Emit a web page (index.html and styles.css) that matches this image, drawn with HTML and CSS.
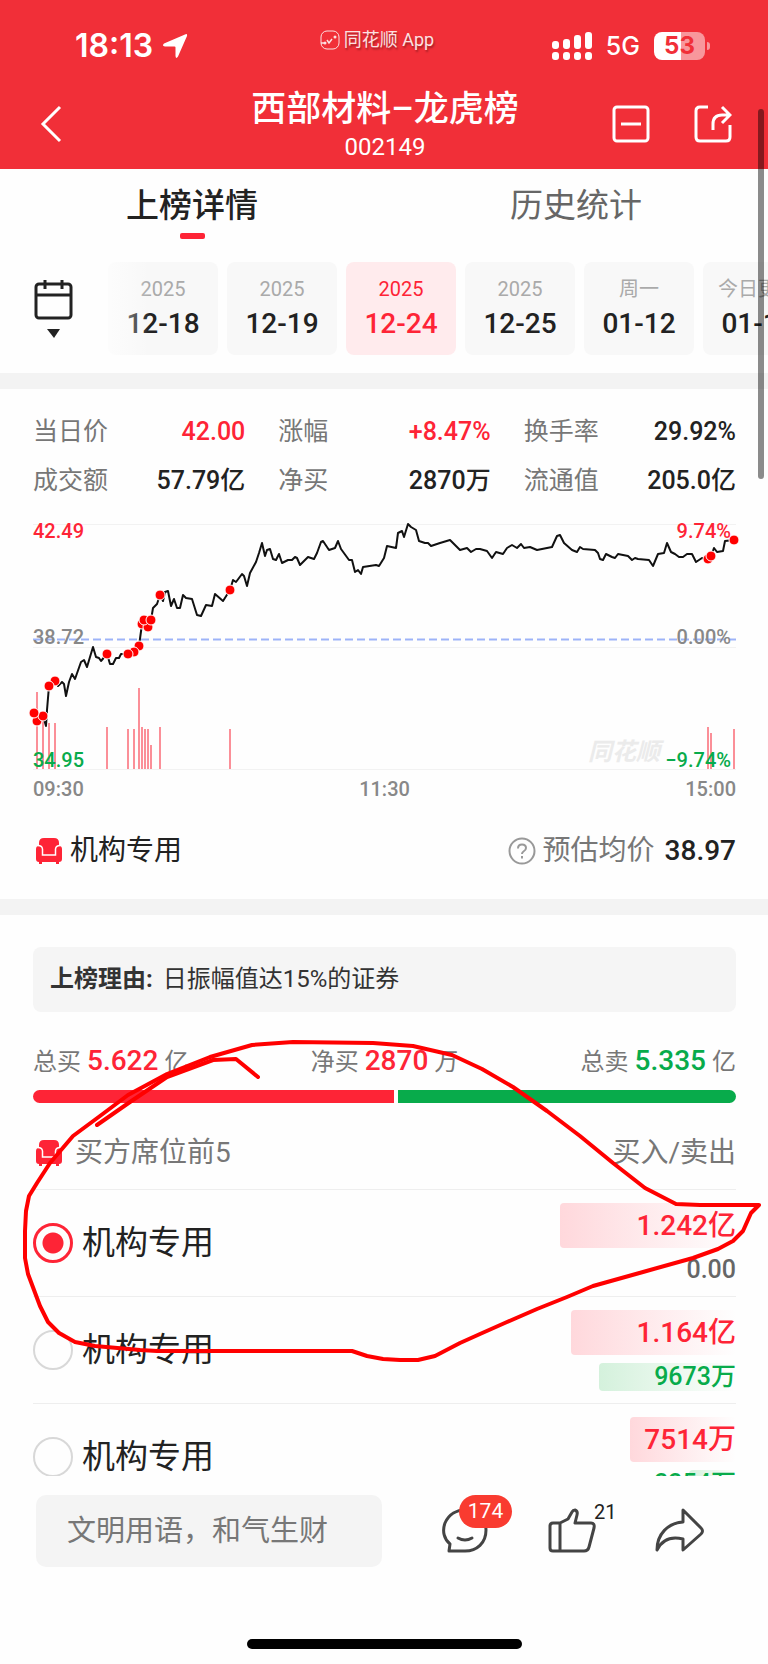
FILE: index.html
```html
<!DOCTYPE html>
<html lang="zh-CN">
<head>
	<meta charset="UTF-8">
	<meta name="viewport" content="width=device-width, initial-scale=1">
	<title>西部材料-龙虎榜</title>
	<link rel="stylesheet" href="styles.css">
</head>
<body>
<div class="app">

	<header class="header">
		<div class="status">
			<div class="status-left">
				<span class="time">18:13</span>
				<svg width="26" height="26" viewBox="0 0 26 26"><path d="M23 1.500Q25.500 0 25 3L16 23.500Q14 26.500 13.500 23V14.500Q13.500 13.500 12.500 13.500H3Q-.5 13 2 10.500Z" fill="#fff"/></svg>
			</div>
			<div class="brand">
				<svg width="20" height="20" viewBox="0 0 20 20" fill="none" stroke="#fff" stroke-width="1"><rect x="1" y="1" width="18" height="18" rx="6"/><path d="M1 13h4M7 10l2 3 3-4" stroke-width="1.500"/><circle cx="15" cy="7" r="1.500" fill="#fff" stroke="none"/><circle cx="5" cy="13" r="1.500" fill="#fff" stroke="none"/></svg>
				<span>同花顺 App</span>
			</div>
			<div class="status-right">
				<svg width="40" height="28" viewBox="0 0 40 28" fill="#fff">
					<rect x="0" y="9" width="7" height="8" rx="3"/><rect x="11" y="7" width="7" height="10" rx="3"/><rect x="22" y="3" width="7" height="14" rx="3"/><rect x="33" y="0" width="7" height="17" rx="3"/>
					<rect x="0" y="20" width="7" height="8" rx="3"/><rect x="11" y="20" width="7" height="8" rx="3"/><rect x="22" y="20" width="7" height="8" rx="3"/><rect x="33" y="20" width="7" height="8" rx="3"/>
				</svg>
				<span class="net">5G</span>
				<span class="battery">53</span>
			</div>
		</div>
		<div class="nav">
			<button class="icon-btn" aria-label="返回">
				<svg width="24" height="38" viewBox="0 0 24 38" fill="none" stroke="#fff" stroke-width="3"><path d="M22 2L5 19l17 17"/></svg>
			</button>
			<div class="title">
				<h1>西部材料–龙虎榜</h1>
				<p>002149</p>
			</div>
			<div class="nav-right">
				<button class="icon-btn" aria-label="缩小">
					<svg width="38" height="38" viewBox="0 0 38 38" fill="none" stroke="#fff" stroke-width="3"><rect x="2" y="2" width="34" height="34" rx="3"/><path d="M9 19h20"/></svg>
				</button>
				<button class="icon-btn" aria-label="分享">
					<svg width="38" height="38" viewBox="0 0 38 38" fill="none" stroke="#fff" stroke-width="3"><path d="M14 2H6q-4 0-4 4v26q0 4 4 4h26q4 0 4-4V20M19 25v-6q0-9 9-9h7M28 2l8 8-8 8"/></svg>
				</button>
			</div>
		</div>
	</header>

	<main class="main">
		<nav class="tabs">
			<a href="#detail" class="tab active">上榜详情</a>
			<a href="#history" class="tab">历史统计</a>
		</nav>

		<div class="dates">
			<button class="calendar" aria-label="选择日期">
				<svg width="40" height="60" viewBox="0 0 40 60" fill="none" stroke="#222" stroke-width="3"><rect x="3" y="5" width="35" height="34" rx="3"/><path d="M3 16h35M12 1v9M29 1v9"/><path d="M14 50h13l-6 9z" fill="#222" stroke="none"/></svg>
			</button>
			<div class="chips">
				<button class="chip"><small>2025</small><b>12-18</b></button>
				<button class="chip"><small>2025</small><b>12-19</b></button>
				<button class="chip on"><small>2025</small><b>12-24</b></button>
				<button class="chip"><small>2025</small><b>12-25</b></button>
				<button class="chip"><small>周一</small><b>01-12</b></button>
				<button class="chip"><small>今日更新</small><b>01-13</b></button>
			</div>
		</div>

		<section class="quote">
			<dl class="stats">
				<div><dt>当日价</dt><dd class="red">42.00</dd></div>
				<div><dt>涨幅</dt><dd class="red">+8.47%</dd></div>
				<div><dt>换手率</dt><dd>29.92%</dd></div>
				<div><dt>成交额</dt><dd>57.79亿</dd></div>
				<div><dt>净买</dt><dd>2870万</dd></div>
				<div><dt>流通值</dt><dd>205.0亿</dd></div>
			</dl>

			<svg class="chart" viewBox="0 0 703 246">
				<path class="grid" d="M0 .5H703M0 123.500H703M0 245.500H703"/>
				<text class="mark" x="555" y="236">同花顺</text>
				<path class="base" d="M0 115.500H703"/>
				<!-- 上榜资金 -->
				<path class="vol" d="M4 168V245M10 197V245M16 199V245M22 199V245M74 203V245M95 205V245M101 205V245M106 164V245M109 203V245M112 205V245M115 205V245M118 221V245M127 203V245M197 205V245M675 203V245M678 209V245M701 205V245"/>
				<polyline class="price" points="1,189 4,197 10,192 13,202 14,186 16,162 22,157 25,162 29,158 31,160 33,172 36,158 39,150 42,155 48,138 51,136 54,143 60,123 63,133 66,134 68,137 74,130 77,140 80,140 83,134 86,134 88,130 95,130 101,128 106,122 109,100 111,96 115,103 118,96 120,84 124,80 127,71 130,77 132,68 135,67 138,82 141,75 144,84 147,84 150,71 153,74 159,75 164,91 168,92 173,81 179,82 182,70 190,77 197,66 200,56 203,58 209,50 211,52 214,62 217,49 223,38 226,29 229,19 232,32 234,26 237,25 240,35 243,36 246,30 249,39 255,36 259,36 262,33 264,34 267,41 275,33 281,35 284,29 288,18 290,17 296,26 302,24 305,17 308,25 316,36 319,36 322,48 325,46 328,50 330,43 343,41 346,42 351,34 354,22 363,24 365,9 369,7 371,13 375,0 378,3 383,6 386,17 392,19 395,19 398,22 407,19 417,16 427,26 434,24 438,28 443,25 447,25 454,27 459,34 463,28 470,30 474,24 479,21 484,24 488,20 491,24 497,23 504,26 519,23 524,12 527,11 531,19 539,26 544,28 547,23 550,25 562,26 565,29 567,35 570,36 573,30 579,33 582,34 585,30 595,32 599,36 602,34 605,35 616,36 620,42 625,30 631,29 634,19 638,28 642,30 646,33 650,33 654,30 659,30 663,38 669,34 675,35 678,32 681,24 684,28 690,27 692,17 701,16"/>
				<g class="dots">
					<circle cx="4" cy="197" r="5"/><circle cx="10" cy="192" r="5"/><circle cx="1" cy="189" r="5"/>
					<circle cx="22" cy="157" r="5"/><circle cx="16" cy="162" r="5"/><circle cx="74" cy="130" r="5"/>
					<circle cx="106" cy="122" r="5"/><circle cx="101" cy="128" r="5"/><circle cx="95" cy="130" r="5"/>
					<circle cx="109" cy="100" r="5"/><circle cx="115" cy="103" r="5"/><circle cx="111" cy="96" r="5"/><circle cx="118" cy="96" r="5"/>
					<circle cx="127" cy="71" r="5"/><circle cx="197" cy="66" r="5"/>
					<circle cx="675" cy="35" r="5"/><circle cx="678" cy="32" r="5"/><circle cx="701" cy="16" r="5"/>
				</g>
				<text class="up" x="0" y="14">42.49</text>
				<text class="flat" x="0" y="120">38.72</text>
				<text class="down" x="0" y="243">34.95</text>
				<text class="up end" x="698" y="14">9.74%</text>
				<text class="flat end" x="698" y="120">0.00%</text>
				<text class="down end" x="698" y="243">−9.74%</text>
			</svg>
			<div class="axis"><span>09:30</span><span>11:30</span><span>15:00</span></div>

			<div class="summary">
				<svg class="sofa" width="28" height="28" viewBox="0 0 28 28"><use href="#sofa"/></svg>
				<span class="org">机构专用</span>
				<svg class="help" width="28" height="28" viewBox="0 0 28 28" fill="none" stroke="#999" stroke-width="2"><circle cx="14" cy="14" r="12.500"/><path d="M10 11.500q0-4 4-4t4 3.500q0 2-2.500 3.500-1.500 1-1.500 2.500"/><path d="M14 19v2.500"/></svg>
				<span class="label">预估均价</span>
				<b>38.97</b>
			</div>
		</section>

		<section class="detail" id="detail">
			<p class="reason"><b>上榜理由:</b> 日振幅值达15%的证券</p>

			<div class="totals">
				<span>总买<b class="red">5.622</b>亿</span>
				<span>净买<b class="red">2870</b>万</span>
				<span>总卖<b class="green">5.335</b>亿</span>
			</div>
			<div class="ratio">
				<i class="buy" style="flex-grow: 5.622"></i>
				<i class="sell" style="flex-grow: 5.25"></i>
			</div>

			<div class="seats-head">
				<svg class="sofa" width="28" height="28" viewBox="0 0 28 28"><g id="sofa"><path d="M4 6Q4 1 9 1H19Q24 1 24 6V20H4Z" fill="#fe2436"/><path d="M1 12Q1 9 4 9T7 12V18H21V12Q21 9 24 9T27 12V22Q27 25 24 25V27H21V25H7V27H4V25Q1 25 1 22Z" fill="#fe2436"/><path d="M3 8.500Q7 8.500 7.500 12V18H20.500V12Q21 8.500 25 8.500" fill="none" stroke="#fff" stroke-width="1.500"/></g></svg>
				<h2>买方席位前5</h2>
				<span>买入/卖出</span>
			</div>

			<ul class="seats">
				<li>
					<label><input type="radio" name="seat" checked>机构专用</label>
					<div class="amount">
						<div class="in" style="width: 176px">1.242亿</div>
						<div class="out zero">0.00</div>
					</div>
				</li>
				<li>
					<label><input type="radio" name="seat">机构专用</label>
					<div class="amount">
						<div class="in" style="width: 165px">1.164亿</div>
						<div class="out" style="width: 137px">9673万</div>
					</div>
				</li>
				<li>
					<label><input type="radio" name="seat">机构专用</label>
					<div class="amount">
						<div class="in" style="width: 106px">7514万</div>
						<div class="out" style="width: 47px">3354万</div>
					</div>
				</li>
			</ul>

			<!-- 手绘圈注 -->
			<svg class="scribble" viewBox="0 0 768 350">
				<path d="M252 14L210 26 167 43 128 64 100 85 73 105 50 132 37 152 29 165 26 180 25 200 25 227 28 243 40 275 48 291 59 302 75 311 95 315 140 319 157 320 352 320 367 325 383 328 400 329 418 329 435 325 460 312 480 303 507 291 537 278 567 266 593 255 643 241 693 227 718 218 733 210 743 200 751 182 759 174 700 174 676 173 645 157 613 132 580 105 547 80 513 56 482 38 452 24 413 15 373 12 293 11Z"/>
				<path d="M258 46L236 28 213 29 167 46 130 71 97 94"/>
			</svg>
		</section>
	</main>

	<footer class="footer">
		<div class="bar">
			<input type="text" class="say" placeholder="文明用语，和气生财" aria-label="评论">
			<button class="action" aria-label="评论列表">
				<svg width="48" height="46" viewBox="0 0 48 46"><path d="M8 43L9 36C3 31 1 23 4 15C8 6 16 2 24 2C36 2 45 11 45 22C45 35 36 43 24 43Z"/><path d="M17 30q7 4 14 0"/></svg>
				<span class="badge">174</span>
			</button>
			<button class="action" aria-label="点赞">
				<svg width="48" height="46" viewBox="0 0 48 46"><path d="M12 15L20 11 24 4Q25 2 27 2Q30 3 29 7L27 15H43Q47 15 46 20L41 39Q40 43 36 43H5Q2 43 2 40V18Q2 15 5 15ZM12 15V43"/></svg>
				<span class="count">21</span>
			</button>
			<button class="action" aria-label="转发">
				<svg width="50" height="46" viewBox="0 0 50 46"><path d="M28 2L46 20Q49 23 46 26L28 42V31C16 28 7 32 2 42C2 26 13 15 28 14Z"/></svg>
			</button>
		</div>
		<div class="home"></div>
	</footer>

	<div class="scroll"></div>
</div>
</body>
</html>
```

FILE: styles.css
```css
*{
	padding: 0;
	margin: 0;
	box-sizing: border-box;
	list-style: none;
}
body{
	font-family: Roboto, "Noto Sans CJK SC", sans-serif;
	color: #222;
	background: #fefefe;
}
button{
	border: 0;
	background: none;
	font: inherit;
	color: inherit;
}
svg{
	display: block;
}
b{
	font-weight: 500;
}
.red{
	color: #fe2436;
}
.green{
	color: #08ab4b;
}
.app{
	position: relative;
	height: 100vh;
	display: flex;
	flex-direction: column;
	overflow: hidden;
}

/* 顶部 */
.header{
	flex: none;
	background: #f12f38;
	color: #fff;
}
.status{
	height: 92px;
	display: grid;
	grid-template-columns: 1fr auto 1fr;
	align-items: center;
}
.status-left,
.status-right,
.brand{
	display: flex;
	align-items: center;
}
.status-left{
	gap: 9px;
	padding-left: 75px;
}
.time{
	font: 600 32px/40px Inter, sans-serif;
}
.brand{
	gap: 4px;
	padding: 0 14px 12px 0;
	font-size: 18px;
	line-height: 24px;
	opacity: .85;
	text-shadow: 1px 2px 2px rgba(0,0,0,.4);
}
.status-right{
	justify-content: flex-end;
	gap: 14px;
	padding-right: 63px;
}
.net{
	font: 500 25px/32px Inter, sans-serif;
}
.battery{
	position: relative;
	width: 51px;
	height: 28px;
	border-radius: 8px;
	background: linear-gradient(90deg, #fff 27px, rgba(255,255,255,.5) 27px);
	color: #f12f38;
	font: 700 24px/28px Inter, sans-serif;
	text-align: center;
}
.battery::after{
	content: "";
	position: absolute;
	left: 53px;
	top: 10px;
	width: 3px;
	height: 8px;
	border-radius: 0 3px 3px 0;
	background: rgba(255,255,255,.5);
}
.nav{
	height: 77px;
	padding: 0 36px 0 38px;
	display: grid;
	grid-template-columns: 1fr auto 1fr;
}
.nav .icon-btn{
	height: 64px;
}
.nav > .icon-btn{
	justify-self: start;
}
.nav-right{
	display: flex;
	justify-content: flex-end;
	gap: 44px;
}
.title{
	text-align: center;
}
.title h1{
	font-size: 35px;
	font-weight: 500;
	line-height: 36px;
}
.title p{
	font-size: 24px;
	line-height: 38px;
}

/* 标签页 */
.main{
	flex: 1;
	min-height: 0;
	overflow: hidden;
}
.tabs{
	display: flex;
}
.tab{
	flex: 1;
	position: relative;
	text-align: center;
	font-size: 33px;
	line-height: 74px;
	height: 93px;
	color: #666;
	text-decoration: none;
}
.tab.active{
	color: #222;
	font-weight: 500;
}
.tab.active::after{
	content: "";
	position: absolute;
	left: 50%;
	top: 64px;
	width: 25px;
	height: 6px;
	margin-left: -12px;
	border-radius: 2px;
	background: #fe2436;
}
.dates{
	display: flex;
	padding-bottom: 18px;
}
.calendar{
	flex: none;
	width: 108px;
	padding-left: 33px;
}
.chips{
	position: relative;
	flex: 1;
	min-width: 0;
	display: flex;
	gap: 9px;
	overflow: hidden;
}
/* 左侧渐隐 */
.chips::before{
	content: "";
	position: absolute;
	left: 0;
	top: 0;
	width: 42px;
	height: 100%;
	background: linear-gradient(90deg, rgba(254,254,254,.7), rgba(254,254,254,0));
}
.chip{
	flex: none;
	width: 110px;
	height: 93px;
	border-radius: 8px;
	background: #f8f8f8;
}
.chip small,
.chip b{
	display: block;
	white-space: nowrap;
}
.chip small{
	font-size: 20px;
	line-height: 30px;
	color: #aaa;
}
.chip b{
	font-size: 28px;
	line-height: 40px;
}
.chip.on{
	background: #ffebed;
}
.chip.on small,
.chip.on b{
	color: #fe2436;
}

/* 行情 */
.quote{
	padding: 18px 32px 28px 33px;
	border-top: 16px solid #f3f3f3;
	border-bottom: 16px solid #f3f3f3;
}
.stats{
	display: grid;
	grid-template-columns: repeat(3, 1fr);
	column-gap: 33px;
}
.stats div{
	display: flex;
	justify-content: space-between;
	line-height: 49px;
	font-size: 25px;
}
.stats dt{
	color: #777;
}
.stats dd{
	font-weight: 500;
}
.chart{
	width: 100%;
	margin-top: 19px;
	overflow: visible;
}
.chart path,
.chart polyline{
	fill: none;
}
.grid{
	stroke: #f2f2f2;
}
.base{
	stroke: #9db3f8;
	stroke-width: 2;
	stroke-dasharray: 8 4;
}
.vol{
	stroke: #fb8f98;
	stroke-width: 2;
}
.price{
	stroke: #111;
	stroke-width: 2;
	stroke-linejoin: round;
}
.dots{
	fill: #f00;
	stroke: #fff;
	stroke-width: 1;
}
.chart text{
	font-size: 20px;
	font-weight: 500;
}
.chart .up{
	fill: #fe2436;
}
.chart .flat{
	fill: #888;
}
.chart .down{
	fill: #08ab4b;
}
.chart .end{
	text-anchor: end;
}
.chart .mark{
	fill: #ebebeb;
	font-size: 24px;
	font-weight: 700;
	font-style: italic;
}
.axis{
	display: flex;
	justify-content: space-between;
	font-size: 20px;
	font-weight: 500;
	line-height: 38px;
	color: #888;
}
.summary{
	display: flex;
	align-items: center;
	margin-top: 23px;
	font-size: 28px;
	line-height: 40px;
}
.sofa{
	margin: 0 7px 0 2px;
}
.help{
	margin-left: auto;
	margin-right: 7px;
}
.summary .label{
	color: #777;
	margin-right: 10px;
}

/* 上榜详情 */
.detail{
	position: relative;
	padding: 32px 32px 0 33px;
}
.reason{
	padding: 0 17px;
	border-radius: 8px;
	background: #f5f5f5;
	font-size: 24px;
	line-height: 65px;
	color: #333;
}
.reason b{
	font-weight: 700;
	margin-right: 4px;
}
.totals{
	display: flex;
	justify-content: space-between;
	margin-top: 29px;
	font-size: 24px;
	line-height: 40px;
	color: #777;
}
.totals b{
	font-size: 28px;
	margin: 0 6px;
}
.ratio{
	display: flex;
	gap: 4px;
	height: 13px;
	margin-top: 8px;
	border-radius: 7px;
	overflow: hidden;
}
.ratio i{
	flex-basis: 0;
}
.buy{
	background: #fe2436;
}
.sell{
	background: #08ab4b;
}
.seats-head{
	display: flex;
	align-items: center;
	height: 68px;
	margin-top: 18px;
	padding-bottom: 4px;
	font-size: 28px;
	line-height: 40px;
	color: #777;
}
.seats-head h2{
	flex: 1;
	margin-left: 5px;
	font-size: 28px;
	font-weight: 400;
}
.seats li{
	display: flex;
	align-items: center;
	justify-content: space-between;
	height: 107px;
	border-top: 1px solid #eee;
}
.seats label{
	display: flex;
	align-items: center;
	gap: 9px;
	font-size: 33px;
	line-height: 40px;
}
.seats input{
	appearance: none;
	width: 40px;
	height: 40px;
	border: 2px solid #d8d8d8;
	border-radius: 50%;
}
.seats input:checked{
	border: 3px solid #fe2436;
	background: radial-gradient(circle, #fe2436 10px, transparent 11px);
}
.amount{
	display: flex;
	flex-direction: column;
	align-items: flex-end;
	gap: 8px;
}
.in,
.out{
	display: flex;
	justify-content: flex-end;
	border-radius: 4px;
	white-space: nowrap;
	font-weight: 500;
}
.in{
	height: 45px;
	font-size: 28px;
	line-height: 45px;
	color: #fe2436;
	background: linear-gradient(90deg, #ffd8dc, #fefefe);
}
.out{
	height: 28px;
	font-size: 25px;
	line-height: 28px;
	color: #08ab4b;
	background: linear-gradient(90deg, #d4f1dc, #fefefe);
}
.out.zero{
	color: #666;
	background: none;
}
.scribble{
	position: absolute;
	left: 0;
	top: 116px;
	width: 100%;
	fill: none;
	stroke: #f00;
	stroke-width: 4;
	stroke-linecap: round;
	stroke-linejoin: round;
	pointer-events: none;
}

/* 底部 */
.footer{
	flex: none;
	padding: 19px 36px 15px;
	background: #fefefe;
}
.bar{
	display: flex;
	align-items: center;
	gap: 59px;
	margin-right: 27px;
}
.say{
	flex: 1;
	min-width: 0;
	height: 72px;
	padding: 0 31px;
	border: 0;
	border-radius: 10px;
	background: #f4f4f4;
	font: 29px Roboto, "Noto Sans CJK SC", sans-serif;
}
.say::placeholder{
	color: #777;
}
.action{
	position: relative;
	flex: none;
}
.action path{
	fill: none;
	stroke: #444;
	stroke-width: 3;
	stroke-linejoin: round;
	stroke-linecap: round;
}
.badge{
	position: absolute;
	left: 18px;
	top: -13px;
	width: 53px;
	height: 33px;
	border-radius: 17px;
	background: #f93b30;
	color: #fff;
	font-size: 21px;
	line-height: 33px;
}
.count{
	position: absolute;
	left: 46px;
	top: -8px;
	font-size: 20px;
	line-height: 24px;
}
.home{
	width: 275px;
	height: 10px;
	margin: 72px auto 0;
	border-radius: 5px;
	background: #000;
}
.scroll{
	position: absolute;
	right: 4px;
	top: 109px;
	width: 6px;
	height: 370px;
	border-radius: 3px;
	background: rgba(0,0,0,.45);
}
```
